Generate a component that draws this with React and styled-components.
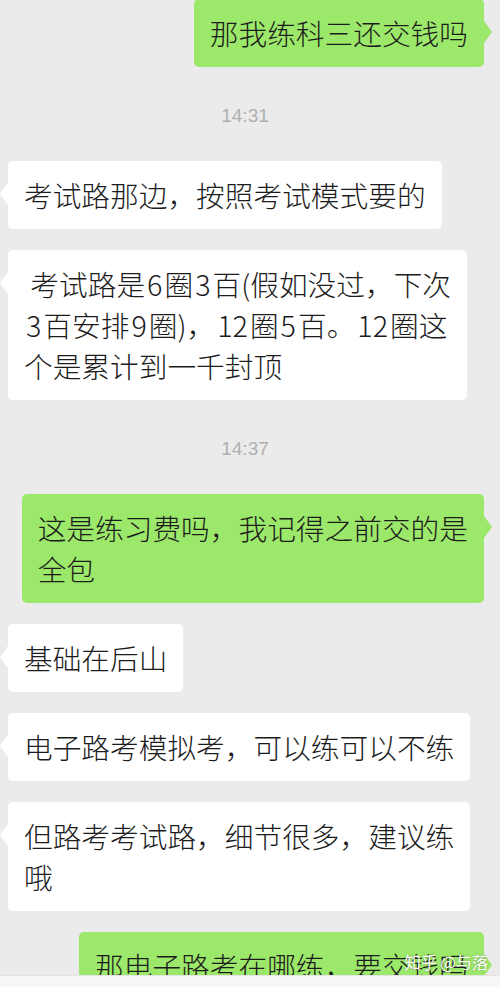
import styled, { createGlobalStyle } from "styled-components";

const GlobalStyle = createGlobalStyle`
  html, body {
    margin: 0;
    padding: 0;
    background: #ebebeb;
  }
`;

const Screen = styled.div`
  position: relative;
  width: 500px;
  height: 987px;
  display: flex;
  flex-direction: column;
  overflow: hidden;
  background: #ebebeb;
  font-family: "Noto Sans CJK SC", "Noto Sans", sans-serif;
`;

const Chat = styled.div`
  flex: 1;
  min-height: 0;
  overflow: hidden;
  display: flex;
  flex-direction: column;
  gap: 21px;
  margin-top: -1px;
`;

const TimeStamp = styled.div`
  margin: 17px 10px 13px 0;
  height: 22px;
  line-height: 22px;
  text-align: center;
  font-family: "Liberation Sans", Arial, sans-serif;
  font-size: 19px;
  color: #b0b0b0;
`;

const Row = styled.div`
  display: flex;
  justify-content: ${(props) => (props.mine ? "flex-end" : "flex-start")};
  padding: ${(props) => (props.mine ? "0 16px 0 0" : "0 0 0 8px")};
`;

const Bubble = styled.div`
  position: relative;
  padding: 13px 16px 14px 16px;
  border-radius: 5px;
  background: ${(props) => (props.mine ? "#9ce86a" : "#ffffff")};
  color: #1c1c1c;
  font-size: 28.7px;
  font-weight: 300;
  line-height: 41px;
  white-space: pre;

  &::after {
    content: "";
    position: absolute;
    top: 22px;
    width: 0;
    height: 0;
    border-top: 11px solid transparent;
    border-bottom: 11px solid transparent;
    ${(props) =>
      props.mine
        ? `right: -8px; border-left: 8px solid #9ce86a;`
        : `left: -8px; border-right: 8px solid #ffffff;`}
  }
`;

const Line = styled.div`
  display: block;
`;

const Num = styled.span`
  padding: 0 2px;
`;

const Footer = styled.div`
  height: 11px;
  flex-shrink: 0;
  background: #f6f6f6;
  border-top: 1px solid #e4e4e4;
`;

const Watermark = styled.div`
  position: absolute;
  right: 12px;
  bottom: 13px;
  font-size: 16.5px;
  letter-spacing: -0.3px;
  color: #ffffff;
  text-shadow: 0 0 2px rgba(0, 0, 0, 0.35);
  font-family: "Noto Sans CJK SC", sans-serif;
`;

// digits get a little air around them, as the phone renders it
const renderLine = (text) =>
  text.split(/(\d+)/).map((part, k) =>
    /^\d+$/.test(part) ? <Num key={k}>{part}</Num> : part
  );

const items = [
  { mine: true, lines: ["那我练科三还交钱吗"] },
  { time: "14:31" },
  { lines: ["考试路那边，按照考试模式要的"] },
  {
    lines: [
      " 考试路是6圈3百(假如没过，下次",
      "3百安排9圈)，12圈5百。12圈这",
      "个是累计到一千封顶",
    ],
  },
  { time: "14:37" },
  { mine: true, lines: ["这是练习费吗，我记得之前交的是", "全包"] },
  { lines: ["基础在后山"] },
  { lines: ["电子路考模拟考，可以练可以不练"] },
  { lines: ["但路考考试路，细节很多，建议练", "哦"] },
  { mine: true, lines: ["那电子路考在哪练，要交钱吗"] },
];

const App = () => {
  return (
    <Screen>
      <GlobalStyle />
      <Chat>
        {items.map((item, i) =>
          item.time ? (
            <TimeStamp key={i}>{item.time}</TimeStamp>
          ) : (
            <Row key={i} mine={item.mine}>
              <Bubble mine={item.mine}>
                {item.lines.map((l, j) => (
                  <Line key={j}>{renderLine(l)}</Line>
                ))}
              </Bubble>
            </Row>
          )
        )}
      </Chat>
      <Footer />
      <Watermark>知乎 @与落</Watermark>
    </Screen>
  );
};

export default App;
